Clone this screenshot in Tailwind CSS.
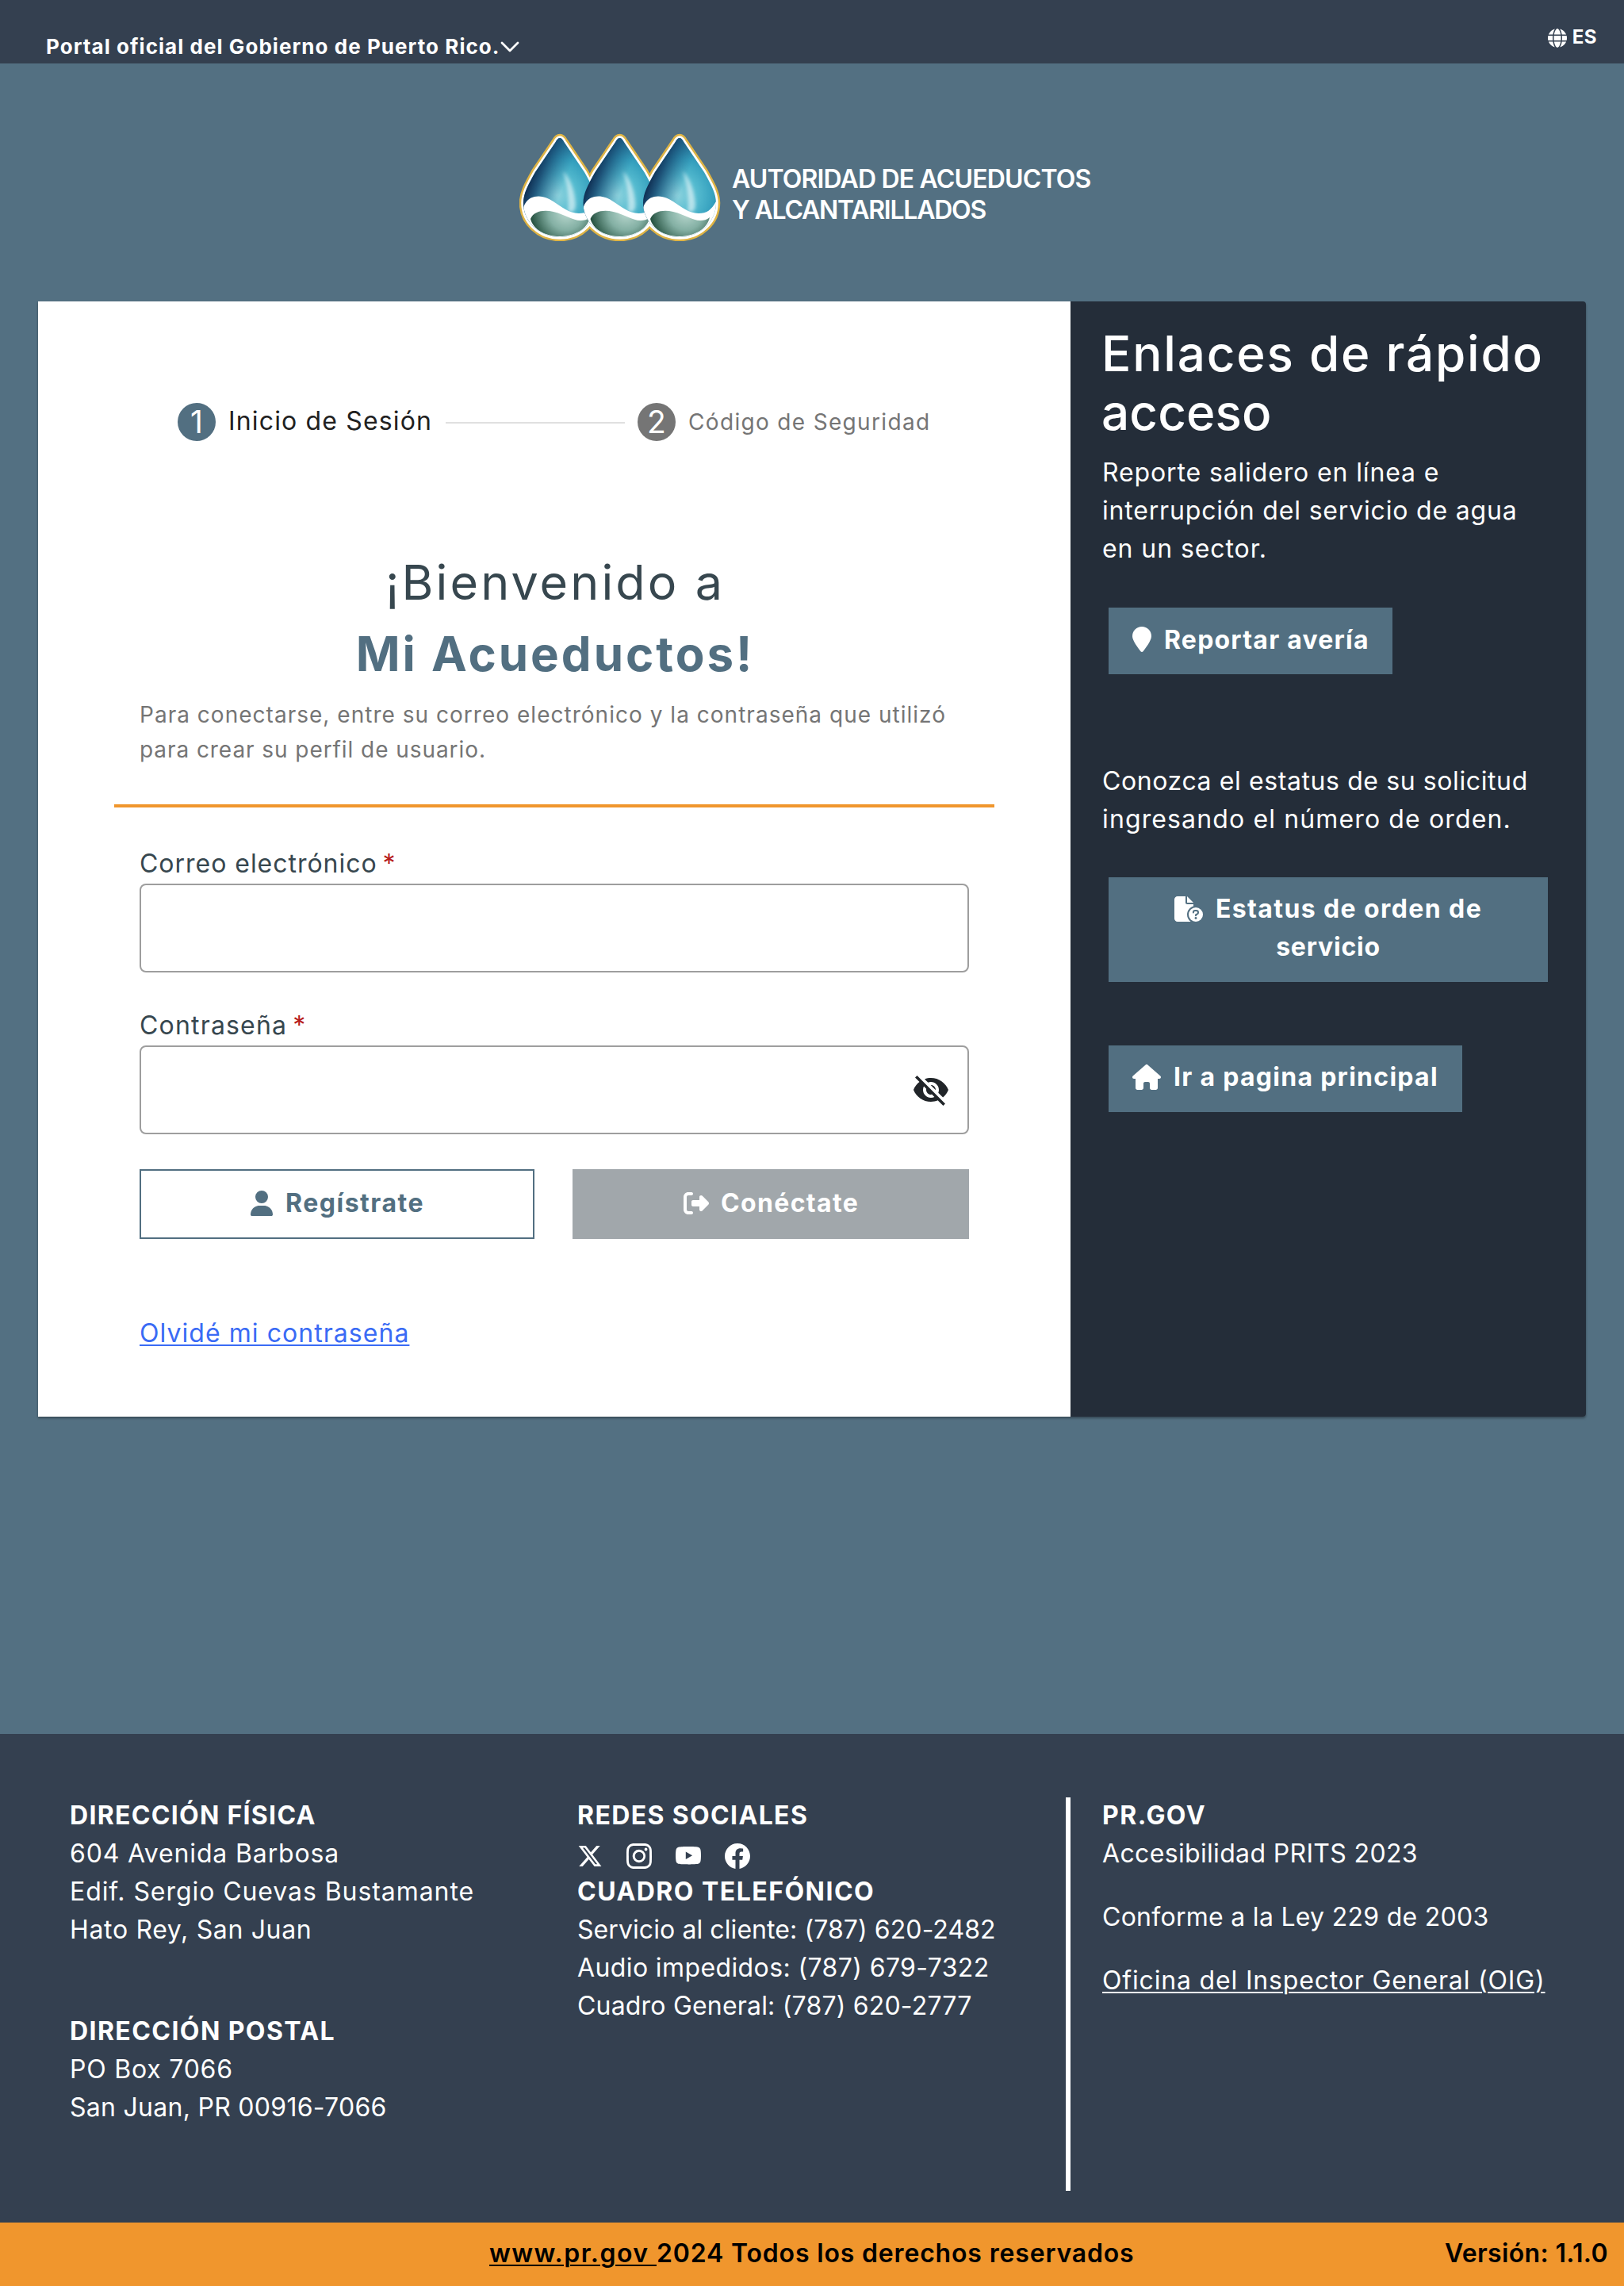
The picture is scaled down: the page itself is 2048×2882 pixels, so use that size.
<!DOCTYPE html>
<html lang="es">
<head>
<meta charset="utf-8">
<title>Mi Acueductos</title>
<script src="https://cdn.jsdelivr.net/npm/@tailwindcss/browser@4"></script>
</head>
<body class="bg-[#537082] font-['Inter',sans-serif] text-[32px] leading-[48px] text-white whitespace-nowrap">

<header class="flex h-20 items-start justify-between bg-[#344050] pl-[58px] pr-[34px]">
  <div class="flex items-center pt-[40px]">
    <span class="text-[26px] leading-[38px] font-bold tracking-[1.05px]">Portal oficial del Gobierno de Puerto Rico.</span>
    <svg class="w-6 h-[14px]" viewBox="0 0 24 14" fill="none" stroke="currentColor" stroke-width="2.8" stroke-linecap="round" stroke-linejoin="round"><path d="M2 2l10 10L22 2"/></svg>
  </div>
  <div class="flex items-start gap-[7px] pt-[29px]">
    <svg class="mt-[7px] size-6" viewBox="0 0 512 512" fill="currentColor"><path d="M352 256c0 22.2-1.2 43.6-3.3 64H163.3c-2.2-20.4-3.3-41.8-3.3-64s1.2-43.6 3.3-64H348.7c2.2 20.4 3.3 41.8 3.3 64zm28.8-64H503.9c5.3 20.5 8.1 41.9 8.1 64s-2.8 43.5-8.1 64H380.8c2.1-20.6 3.2-42 3.2-64s-1.1-43.4-3.2-64zm112.6-32H376.7c-10-63.9-29.8-117.4-55.3-151.6c78.3 20.7 142 77.5 171.9 151.6zm-149.1 0H167.7c6.1-36.4 15.5-68.6 27-94.7c10.5-23.6 22.2-40.7 33.5-51.5C239.4 3.2 248.7 0 256 0s16.6 3.2 27.8 13.8c11.3 10.8 23 27.9 33.5 51.5c11.6 26 20.9 58.2 27 94.7zm-209 0H18.6C48.6 85.9 112.2 29.1 190.6 8.4C165.1 42.6 145.3 96.1 135.3 160zM8.1 192H131.2c-2.1 20.6-3.2 42-3.2 64s1.1 43.4 3.2 64H8.1C2.8 299.5 0 278.1 0 256s2.8-43.5 8.1-64zM194.7 446.6c-11.6-26-20.9-58.2-27-94.6H344.3c-6.1 36.4-15.5 68.6-27 94.6c-10.5 23.6-22.2 40.7-33.5 51.5C272.6 508.8 263.3 512 256 512s-16.6-3.2-27.8-13.8c-11.3-10.8-23-27.9-33.5-51.5zM135.3 352c10 63.9 29.8 117.4 55.3 151.6C112.2 482.9 48.6 426.1 18.6 352H135.3zm358.1 0c-30 74.1-93.6 130.9-171.9 151.6c25.5-34.2 45.2-87.7 55.3-151.6H493.4z"/></svg>
    <span class="text-[24px] leading-9 font-bold tracking-[.5px]">ES</span>
  </div>
</header>

<div class="flex h-[300px] items-start pl-[655px]">
  <svg class="mt-[88px] w-[254px] h-[136px]" viewBox="0 0 254 136">
    <defs>
      <path id="drop" d="M0 6C2.200 6 3.800 8 5.300 11L31 49C40 65 46 76 46 88C46 112 25 131 0 131S-46 112-46 88C-46 76-40 65-31 49L-5.300 11C-3.800 8-2.200 6 0 6Z"/>
      <radialGradient id="water" gradientUnits="userSpaceOnUse" cx="-4" cy="78" r="72"><stop offset="0" stop-color="#8fd3de"/><stop offset=".35" stop-color="#56bcd0"/><stop offset=".65" stop-color="#35a0be"/><stop offset="1" stop-color="#246f93"/></radialGradient>
      <linearGradient id="shade" gradientUnits="userSpaceOnUse" x1="-42" y1="62" x2="0" y2="78"><stop offset="0" stop-color="#0c2548"/><stop offset=".3" stop-color="#123a63" stop-opacity=".8"/><stop offset="1" stop-color="#1b5f8a" stop-opacity="0"/></linearGradient>
      <radialGradient id="ground" gradientUnits="userSpaceOnUse" cx="8" cy="100" r="44"><stop offset="0" stop-color="#b9d8cf"/><stop offset=".5" stop-color="#84b0a4"/><stop offset="1" stop-color="#285443"/></radialGradient>
      <filter id="soft" x="-100%" y="-30%" width="300%" height="160%"><feGaussianBlur stdDeviation="2"/></filter>
      <clipPath id="inside"><use href="#drop"/></clipPath>
      <g id="body">
        <use href="#drop" fill="url(#water)"/>
        <use href="#drop" fill="url(#shade)"/>
        <path d="M4 48C10 66 12 84 10 99C18 101 20 96 20 90C19 72 12 55 4 48Z" fill="#fff" opacity=".55" filter="url(#soft)"/>
        <g clip-path="url(#inside)">
          <path d="M-46 94C-43 84-36 79.500-27 79.500C-8 79.500 4 101 24 101C34 101 40 97 46 86V136H-46Z" fill="#fff"/>
          <path d="M-37 108C-33 98-20 96-8 99C8 103 16 110 26 110C31 110 34 109 38 106C35 121 18 130 0 130C-20 130-34 120-37 108Z" fill="url(#ground)"/>
        </g>
      </g>
    </defs>
    <g fill="#dfb444" stroke="#dfb444" stroke-width="10.500" stroke-linejoin="round"><use href="#drop" x="51"/><use href="#drop" x="126.500"/><use href="#drop" x="202"/></g>
    <g fill="#fff" stroke="#fff" stroke-width="5.500" stroke-linejoin="round"><use href="#drop" x="51"/><use href="#drop" x="126.500"/><use href="#drop" x="202"/></g>
    <use href="#body" x="51"/><use href="#body" x="126.500"/><use href="#body" x="202"/>
  </svg>
  <div class="ml-[14px] mt-[127px] text-[32px] leading-[38.500px] font-semibold">
    <p class="tracking-[-.84px]">AUTORIDAD DE ACUEDUCTOS</p>
    <p class="tracking-[-1.24px]">Y ALCANTARILLADOS</p>
  </div>
</div>

<main class="mx-12 flex h-[1406px] rounded-r-[4px] shadow-[0_2px_3px_rgba(0,0,0,0.35)]">
  <section class="w-[1302px] bg-white text-[#37474f]">
    <div class="flex h-12 items-center mt-32 pl-[176px]">
      <span class="flex size-12 items-center justify-center rounded-full bg-[#526f81] text-[39px] text-white">1</span>
      <span class="ml-[16px] w-[274px] pb-[3px] tracking-[1.15px] text-[#212121]">Inicio de Sesión</span>
      <span class="mt-[2px] h-[2px] w-[226px] bg-[#e0e0e0]"></span>
      <span class="ml-4 flex size-12 items-center justify-center rounded-full bg-[#757575] text-[39px] text-white">2</span>
      <span class="ml-4 text-[28px] tracking-[1.33px] text-[#757575]">Código de Seguridad</span>
    </div>
    <h1 class="mt-[133px] pl-[2px] text-center leading-[90px]">
      <span class="block text-[61px] tracking-[3.1px]">¡Bienvenido a</span>
      <span class="block text-[60px] font-bold tracking-[3px] text-[#526f81]">Mi Acueductos!</span>
    </h1>
    <div class="mt-[10px] ml-32 text-[28px] leading-[44px] text-[#757575]">
      <p class="tracking-[1.02px]">Para conectarse, entre su correo electrónico y la contraseña que utilizó</p>
      <p class="tracking-[.93px]">para crear su perfil de usuario.</p>
    </div>
    <div class="mx-24 mt-[47px] h-1 bg-[#f0962d]"></div>
    <form class="mx-32 mt-[47px]">
      <label class="block tracking-[.97px]">Correo electrónico<span class="ml-[7px] text-[#b71c1c]">*</span></label>
      <div class="mt-px h-28 rounded-lg border-2 border-[#9e9e9e]"></div>
      <label class="mt-[43px] block tracking-[1.18px]">Contraseña<span class="ml-[7px] text-[#b71c1c]">*</span></label>
      <div class="mt-px flex h-28 items-center justify-end rounded-lg border-2 border-[#9e9e9e] pr-[22px]">
        <svg class="size-12" viewBox="0 0 24 24" fill="#212529"><path d="M12 7c2.760 0 5 2.240 5 5 0 .65-.13 1.260-.36 1.830l2.920 2.920c1.510-1.260 2.700-2.890 3.430-4.750-1.730-4.390-6-7.500-11-7.500-1.400 0-2.740.25-3.980.7l2.160 2.160C10.740 7.130 11.350 7 12 7zM2 4.270l2.280 2.280.46.46C3.080 8.300 1.780 10.020 1 12c1.730 4.390 6 7.500 11 7.500 1.550 0 3.030-.3 4.380-.84l.42.42L19.730 22 21 20.730 3.270 3 2 4.270zM7.530 9.800l1.550 1.550c-.05.21-.08.43-.08.65 0 1.660 1.340 3 3 3 .22 0 .44-.03.65-.08l1.550 1.550c-.67.33-1.410.53-2.200.53-2.760 0-5-2.240-5-5 0-.79.2-1.530.53-2.200zm4.310-.78l3.150 3.150.02-.16c0-1.660-1.340-3-3-3l-.17.01z"/></svg>
      </div>
      <div class="mt-11 flex gap-12 font-bold">
        <button type="button" class="flex h-[88px] w-[498px] items-center border-2 border-[#526f81] pb-[3px] pl-[138px] text-[#526f81]">
          <svg class="h-8 w-7" viewBox="0 0 448 512" fill="currentColor"><path d="M224 256A128 128 0 1 0 224 0a128 128 0 1 0 0 256zm-45.700 48C79.800 304 0 383.800 0 482.300C0 498.700 13.300 512 29.700 512H418.300c16.400 0 29.700-13.300 29.700-29.700C448 383.800 368.200 304 269.700 304H178.300z"/></svg>
          <span class="ml-4 tracking-[1.52px]">Regístrate</span>
        </button>
        <button type="button" class="flex h-[88px] w-[500px] items-center bg-[#a1a7ab] pb-[3px] pl-[140px] text-white">
          <svg class="size-8" viewBox="0 0 512 512" fill="currentColor"><path d="M377.900 105.900L500.700 228.700c7.200 7.200 11.300 17.100 11.300 27.300s-4.100 20.100-11.300 27.300L377.900 406.100c-6.400 6.400-15 9.900-24 9.900c-18.700 0-33.900-15.200-33.900-33.900l0-62.100-128 0c-17.700 0-32-14.300-32-32l0-64c0-17.700 14.300-32 32-32l128 0 0-62.100c0-18.700 15.200-33.900 33.900-33.900c9 0 17.600 3.600 24 9.900zM160 96L96 96c-17.700 0-32 14.300-32 32l0 256c0 17.700 14.300 32 32 32l64 0c17.700 0 32 14.300 32 32s-14.300 32-32 32l-64 0c-53 0-96-43-96-96L0 128C0 75 43 32 96 32l64 0c17.700 0 32 14.300 32 32s-14.300 32-32 32z"/></svg>
          <span class="ml-[15px] tracking-[1.35px]">Conéctate</span>
        </button>
      </div>
      <a class="mt-[95px] block w-fit tracking-[1.05px] text-[#3a6bf5] underline decoration-2 underline-offset-[3px]">Olvidé mi contraseña</a>
    </form>
  </section>

  <aside class="w-[650px] rounded-r-[4px] bg-[#242d39] pl-[39px] pt-[29px]">
    <h2 class="text-[62px] leading-[73.600px] font-medium">
      <span class="block tracking-[1.78px]">Enlaces de rápido</span>
      <span class="block tracking-[.1px]">acceso</span>
    </h2>
    <div class="mt-4 pl-px">
      <p class="tracking-[.87px]">Reporte salidero en línea e</p>
      <p class="tracking-[.82px]">interrupción del servicio de agua</p>
      <p class="tracking-[.92px]">en un sector.</p>
    </div>
    <button type="button" class="mt-[49.800px] ml-[9px] flex h-[84px] w-[358px] items-start bg-[#526f81] pl-[30px] pt-[17px] font-bold">
      <svg class="mt-[7px] h-8 w-6" viewBox="0 0 384 512" fill="currentColor"><path d="M384 192c0 87.400-117 243-168.300 307.200c-12.300 15.300-35.100 15.300-47.400 0C117 435 0 279.400 0 192C0 86 86 0 192 0S384 86 384 192z"/></svg>
      <span class="ml-4 tracking-[1.22px]">Reportar avería</span>
    </button>
    <div class="mt-[111px] pl-px">
      <p class="tracking-[.6px]">Conozca el estatus de su solicitud</p>
      <p class="tracking-[1.13px]">ingresando el número de orden.</p>
    </div>
    <button type="button" class="mt-[49px] ml-[9px] flex h-[132px] w-[554px] flex-col items-center bg-[#526f81] pt-[16px] font-bold">
      <span class="flex items-start">
        <svg class="mt-2 h-8 w-9" viewBox="0 0 576 512" fill="currentColor"><path d="M0 64C0 28.700 28.700 0 64 0H224V128c0 17.700 14.300 32 32 32H384v38.600C310.100 219.500 256 287.400 256 368c0 59.100 29.100 111.300 73.700 143.300c-3.200 .5-6.400 .7-9.700 .7H64c-35.300 0-64-28.700-64-64V64zm384 64H256V0L384 128z"/><circle cx="432" cy="368" r="144"/><path d="M382 326c0-26 16-37 36-37h24c22 0 38 16 38 37c0 16-8 26-20 33l-28 16v12" fill="none" stroke="#526f81" stroke-width="32" stroke-linecap="round" stroke-linejoin="round"/><circle cx="432" cy="440" r="23" fill="#526f81"/></svg>
        <span class="ml-4 tracking-[1.4px]">Estatus de orden de</span>
      </span>
      <span class="tracking-[.78px]">servicio</span>
    </button>
    <button type="button" class="mt-20 ml-[9px] flex h-[84px] w-[446px] items-start bg-[#526f81] pl-[30px] pt-[16px] font-bold">
      <svg class="mt-2 h-8 w-9" viewBox="0 0 576 512" fill="currentColor"><path d="M575.800 255.500c0 18-15 32.100-32 32.100h-32l.7 160.200c0 2.700-.2 5.400-.5 8.100V472c0 22.100-17.900 40-40 40H456c-1.100 0-2.200 0-3.300-.1c-1.400 .1-2.800 .1-4.200 .1H416 392c-22.100 0-40-17.900-40-40V448 384c0-17.700-14.300-32-32-32H256c-17.700 0-32 14.300-32 32v64 24c0 22.100-17.900 40-40 40H160 128.100c-1.500 0-3-.1-4.500-.2c-1.200 .1-2.400 .2-3.600 .2H104c-22.100 0-40-17.900-40-40V360c0-.9 0-1.900 .1-2.800V287.600H32c-18 0-32-14-32-32.100c0-9 3-17 10-24L266.400 8c7-7 15-8 22-8s15 2 21 7L564.800 231.500c8 7 12 15 11 24z"/></svg>
      <span class="ml-4 tracking-[1.28px]">Ir a pagina principal</span>
    </button>
  </aside>
</main>

<footer class="mt-[400px]">
  <div class="flex h-[616px] bg-[#344050] pl-[88px] pt-[79px]">
    <div class="w-[640px]">
      <h3 class="font-bold tracking-[1.3px]">DIRECCIÓN FÍSICA</h3>
      <p class="tracking-[.85px]">604 Avenida Barbosa</p>
      <p class="tracking-[.93px]">Edif. Sergio Cuevas Bustamante</p>
      <p class="tracking-[.66px]">Hato Rey, San Juan</p>
      <h3 class="mt-20 font-bold tracking-[1.42px]">DIRECCIÓN POSTAL</h3>
      <p class="tracking-[.78px]">PO Box 7066</p>
      <p class="tracking-[.28px]">San Juan, PR 00916-7066</p>
    </div>
    <div class="w-[616px]">
      <h3 class="font-bold tracking-[1.36px]">REDES SOCIALES</h3>
      <div class="flex h-12 items-center gap-[30px] pt-[6px]">
        <svg class="size-8" viewBox="0 0 512 512" fill="currentColor"><path d="M389.200 48h70.600L305.600 224.200 487 464H345L233.700 318.600 106.500 464H35.800L200.700 275.500 26.800 48H172.400L272.900 180.900 389.200 48zM364.400 421.800h39.100L151.100 88h-42L364.400 421.800z"/></svg>
        <svg class="size-8" viewBox="0 0 16 16" fill="currentColor"><path d="M8 0C5.829 0 5.556.01 4.703.048 3.850.088 3.269.222 2.760.42a3.900 3.900 0 0 0-1.417.923A3.900 3.900 0 0 0 .42 2.760C.222 3.268.087 3.850.048 4.700.01 5.555 0 5.827 0 8.001c0 2.172.01 2.444.048 3.297.04.852.174 1.433.372 1.942.205.526.478.972.923 1.417.444.445.89.719 1.416.923.510.198 1.090.333 1.942.372C5.555 15.990 5.827 16 8 16s2.444-.01 3.298-.048c.851-.04 1.434-.174 1.943-.372a3.900 3.900 0 0 0 1.416-.923c.445-.445.718-.891.923-1.417.197-.509.332-1.090.372-1.942C15.990 10.445 16 10.173 16 8s-.01-2.445-.048-3.299c-.04-.851-.175-1.433-.372-1.941a3.900 3.900 0 0 0-.923-1.417A3.900 3.900 0 0 0 13.240.42c-.510-.198-1.092-.333-1.943-.372C10.443.01 10.172 0 7.998 0zm-.717 1.442h.718c2.136 0 2.389.007 3.232.046.780.035 1.204.166 1.486.275.373.145.640.319.920.599s.453.546.598.920c.110.281.240.705.275 1.485.039.843.047 1.096.047 3.231s-.008 2.389-.047 3.232c-.035.780-.166 1.203-.275 1.485a2.500 2.500 0 0 1-.599.919c-.280.280-.546.453-.920.598-.280.110-.704.240-1.485.276-.843.038-1.096.047-3.232.047s-2.390-.009-3.233-.047c-.780-.036-1.203-.166-1.485-.276a2.500 2.500 0 0 1-.920-.598 2.500 2.500 0 0 1-.600-.920c-.109-.281-.240-.705-.275-1.485-.038-.843-.046-1.096-.046-3.233s.008-2.388.046-3.231c.036-.780.166-1.204.276-1.486.145-.373.319-.640.599-.920s.546-.453.920-.598c.282-.110.705-.240 1.485-.276.738-.034 1.024-.044 2.515-.045zm4.988 1.328a.96.96 0 1 0 0 1.920.96.96 0 0 0 0-1.920m-4.270 1.122a4.109 4.109 0 1 0 0 8.217 4.109 4.109 0 0 0 0-8.217m0 1.441a2.667 2.667 0 1 1 0 5.334 2.667 2.667 0 0 1 0-5.334"/></svg>
        <svg class="size-8" viewBox="0 0 16 16" fill="currentColor"><path d="M8.051 1.999h.089c.822.003 4.987.033 6.110.335a2.010 2.010 0 0 1 1.415 1.420c.101.380.172.883.220 1.402l.010.104.022.260.008.104c.065.914.073 1.770.074 1.957v.075c-.001.194-.010 1.108-.082 2.060l-.008.105-.009.104c-.050.572-.124 1.140-.235 1.558a2.010 2.010 0 0 1-1.415 1.420c-1.160.312-5.569.334-6.180.335h-.142c-.309 0-1.587-.006-2.927-.052l-.170-.006-.087-.004-.171-.007-.171-.007c-1.110-.049-2.167-.128-2.654-.260a2.010 2.010 0 0 1-1.415-1.419c-.111-.417-.185-.986-.235-1.558L.090 9.820l-.008-.104A31 31 0 0 1 0 7.680v-.123c.002-.215.010-.958.064-1.778l.007-.103.003-.052.008-.104.022-.260.010-.104c.048-.519.119-1.023.220-1.402a2.010 2.010 0 0 1 1.415-1.420c.487-.130 1.544-.210 2.654-.260l.170-.007.172-.006.086-.003.171-.007A100 100 0 0 1 7.858 2zM6.400 5.209v4.818l4.157-2.408z"/></svg>
        <svg class="size-8" viewBox="0 0 16 16" fill="currentColor"><path d="M16 8.049c0-4.446-3.582-8.050-8-8.050C3.580 0-.002 3.603-.002 8.050c0 4.017 2.926 7.347 6.750 7.951v-5.625h-2.030V8.050H6.750V6.275c0-2.017 1.195-3.131 3.022-3.131.876 0 1.791.157 1.791.157v1.980h-1.009c-.993 0-1.303.621-1.303 1.258v1.510h2.218l-.354 2.326H9.250V16c3.824-.604 6.750-3.934 6.750-7.951"/></svg>
      </div>
      <h3 class="font-bold tracking-[1.47px]">CUADRO TELEFÓNICO</h3>
      <p class="tracking-[.08px]">Servicio al cliente: (787) 620-2482</p>
      <p class="tracking-[.39px]">Audio impedidos: (787) 679-7322</p>
      <p class="tracking-[.19px]">Cuadro General: (787) 620-2777</p>
    </div>
    <div class="mt-px h-[496px] w-[6px] bg-white"></div>
    <div class="pl-10">
      <h3 class="font-bold tracking-[1.45px]">PR.GOV</h3>
      <p class="tracking-[.34px]">Accesibilidad PRITS 2023</p>
      <p class="mt-8 tracking-[.28px]">Conforme a la Ley 229 de 2003</p>
      <a class="mt-8 block w-fit tracking-[.83px] underline decoration-2 underline-offset-[3px]">Oficina del Inspector General (OIG)</a>
    </div>
  </div>
  <div class="flex h-20 items-center justify-between bg-[#f0962d] pb-[3px] pl-[617px] pr-[20px] font-semibold text-black">
    <p class="tracking-[.83px]"><a class="tracking-[1.45px] underline decoration-2 underline-offset-[3px]">www.pr.gov&nbsp;</a>2024 Todos los derechos reservados</p>
    <p class="tracking-[.35px]">Versión: 1.1.0</p>
  </div>
</footer>
</body>
</html>
